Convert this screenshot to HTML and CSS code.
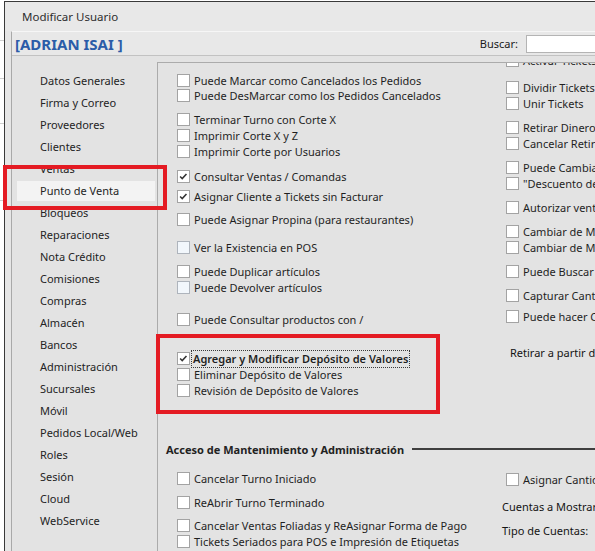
FILE: index.html
```html
<!DOCTYPE html>
<html lang="es">
<head>
<meta charset="utf-8">
<title>Modificar Usuario</title>
<link rel="stylesheet" href="styles.css">
</head>
<body>
<div class="dialog">
  <div class="titlebar">Modificar Usuario</div>
  <div class="frame">
    <div class="header">
      <span class="name">[ADRIAN ISAI ]</span>
      <span class="search-label">Buscar:</span>
      <span class="search-input"></span>
    </div>
    <div class="main">
      <nav class="sidebar">
        <div class="nav-item">Datos Generales</div>
        <div class="nav-item">Firma y Correo</div>
        <div class="nav-item">Proveedores</div>
        <div class="nav-item">Clientes</div>
        <div class="nav-item">Ventas</div>
        <div class="nav-item active">Punto de Venta</div>
        <div class="nav-item">Bloqueos</div>
        <div class="nav-item">Reparaciones</div>
        <div class="nav-item">Nota Crédito</div>
        <div class="nav-item">Comisiones</div>
        <div class="nav-item">Compras</div>
        <div class="nav-item">Almacén</div>
        <div class="nav-item">Bancos</div>
        <div class="nav-item">Administración</div>
        <div class="nav-item">Sucursales</div>
        <div class="nav-item">Móvil</div>
        <div class="nav-item">Pedidos Local/Web</div>
        <div class="nav-item">Roles</div>
        <div class="nav-item">Sesión</div>
        <div class="nav-item">Cloud</div>
        <div class="nav-item">WebService</div>
      </nav>
      <section class="panel">
        <div class="grid">
          <div class="col col-left">
            <div class="row m11"><span class="cb"></span><span class="lbl">Puede Marcar como Cancelados los Pedidos</span></div>
            <div class="row m2"><span class="cb"></span><span class="lbl">Puede DesMarcar como los Pedidos Cancelados</span></div>
            <div class="row m11"><span class="cb"></span><span class="lbl">Terminar Turno con Corte X</span></div>
            <div class="row m3"><span class="cb"></span><span class="lbl">Imprimir Corte X y Z</span></div>
            <div class="row m3"><span class="cb"></span><span class="lbl">Imprimir Corte por Usuarios</span></div>
            <div class="row m12"><span class="cb on"><svg viewBox="0 0 13 13"><path d="M2.5 6.5 L5 9 L10 3.5"/></svg></span><span class="lbl">Consultar Ventas / Comandas</span></div>
            <div class="row m7"><span class="cb on"><svg viewBox="0 0 13 13"><path d="M2.5 6.5 L5 9 L10 3.5"/></svg></span><span class="lbl">Asignar Cliente a Tickets sin Facturar</span></div>
            <div class="row m10"><span class="cb"></span><span class="lbl">Puede Asignar Propina (para restaurantes)</span></div>
            <div class="row m15"><span class="cb tint"></span><span class="lbl">Ver la Existencia en POS</span></div>
            <div class="row m11"><span class="cb"></span><span class="lbl">Puede Duplicar artículos</span></div>
            <div class="row m3"><span class="cb tint"></span><span class="lbl">Puede Devolver artículos</span></div>
            <div class="row m19"><span class="cb"></span><span class="lbl">Puede Consultar productos con /</span></div>
            <div class="row m26"><span class="cb on"><svg viewBox="0 0 13 13"><path d="M2.5 6.5 L5 9 L10 3.5"/></svg></span><span class="lbl focus">Agregar y Modificar Depósito de Valores</span></div>
            <div class="row m3"><span class="cb"></span><span class="lbl">Eliminar Depósito de Valores</span></div>
            <div class="row m3"><span class="cb"></span><span class="lbl">Revisión de Depósito de Valores</span></div>
          </div>
          <div class="col col-right">
            <div class="row mneg"><span class="cb"></span><span class="lbl">Activar Tickets</span></div>
            <div class="row m14"><span class="cb"></span><span class="lbl">Dividir Tickets</span></div>
            <div class="row m3"><span class="cb"></span><span class="lbl">Unir Tickets</span></div>
            <div class="row m11"><span class="cb"></span><span class="lbl">Retirar Dinero</span></div>
            <div class="row m3"><span class="cb"></span><span class="lbl">Cancelar Retiro de Dinero</span></div>
            <div class="row m11"><span class="cb"></span><span class="lbl">Puede Cambiar Precio</span></div>
            <div class="row m3"><span class="cb"></span><span class="lbl">"Descuento de Artículos"</span></div>
            <div class="row m11"><span class="cb"></span><span class="lbl">Autorizar ventas</span></div>
            <div class="row m11"><span class="cb"></span><span class="lbl">Cambiar de Mesa</span></div>
            <div class="row m3"><span class="cb"></span><span class="lbl">Cambiar de Mesero</span></div>
            <div class="row m11"><span class="cb"></span><span class="lbl">Puede Buscar y Reimprimir</span></div>
            <div class="row m11"><span class="cb"></span><span class="lbl">Capturar Cantidad</span></div>
            <div class="row m8"><span class="cb"></span><span class="lbl">Puede hacer Cortes</span></div>
            <div class="text-row m22 indent">Retirar a partir de</div>
          </div>
        </div>
        <div class="heading">
          <span class="heading-text">Acceso de Mantenimiento y Administración</span>
          <span class="rule"></span>
        </div>
        <div class="grid">
          <div class="col col-left">
            <div class="row m15"><span class="cb"></span><span class="lbl">Cancelar Turno Iniciado</span></div>
            <div class="row m11"><span class="cb"></span><span class="lbl">ReAbrir Turno Terminado</span></div>
            <div class="row m10"><span class="cb"></span><span class="lbl">Cancelar Ventas Foliadas y ReAsignar Forma de Pago</span></div>
            <div class="row m3"><span class="cb"></span><span class="lbl">Tickets Seriados para POS e Impresión de Etiquetas</span></div>
          </div>
          <div class="col col-right">
            <div class="row m16"><span class="cb"></span><span class="lbl">Asignar Cantidad</span></div>
            <div class="text-row m13">Cuentas a Mostrar</div>
            <div class="text-row m8">Tipo de Cuentas:</div>
          </div>
        </div>
      </section>
    </div>
  </div>
</div>
<div class="mark mark-nav"></div>
<div class="mark mark-deposit"></div>
</body>
</html>
```

FILE: styles.css
```css
html, body {
  margin: 0;
  height: 100%;
  overflow: hidden;
}

body {
  position: relative;
  background: #ffffff;
  background-image:
    linear-gradient(#cfcfcf, #cfcfcf),
    linear-gradient(#cfcfcf, #cfcfcf),
    linear-gradient(#cfcfcf, #cfcfcf),
    linear-gradient(#cfcfcf, #cfcfcf);
  background-size: 4px 1px;
  background-repeat: no-repeat;
  background-position: 0 40px, 0 78px, 0 123px, 0 200px;
  font-family: "Noto Sans", "Open Sans", sans-serif;
  font-size: 11px;
  color: #1f1f1f;
}

.dialog {
  margin: 1px 0 0 4px;
  width: 600px;
  height: 560px;
  border-top: 1px solid #3a3a3a;
  border-left: 1px solid #3a3a3a;
  background: #e6e6e6;
  display: flex;
  flex-direction: column;
}

.titlebar {
  height: 29px;
  line-height: 29px;
  padding-left: 17px;
  font-size: 11.5px;
  color: #2e2e2e;
  background: #e8e8e8;
}

.frame {
  flex: 1;
  margin-left: 6px;
  border-left: 1px solid #a9a9a9;
  border-top: 1px solid #f6f6f6;
  background: #e3e3e3;
  display: flex;
  flex-direction: column;
  min-height: 0;
}

.header {
  height: 23px;
  border-bottom: 1px solid #c2c2c2;
  background: #e8e8e8;
  display: flex;
  align-items: center;
  padding-left: 3px;
}

.name {
  font-weight: 700;
  font-size: 15px;
  color: #2b5ca8;
}

.search-label {
  margin-left: auto;
  color: #1a1a1a;
}

.search-input {
  width: 79px;
  height: 18px;
  margin-left: 8px;
  box-sizing: border-box;
  border: 1px solid #b4b4b4;
  border-right: 0;
  background: #ffffff;
}

.main {
  flex: 1;
  display: flex;
  min-height: 0;
}

.sidebar {
  width: 145px;
  flex: none;
  padding-top: 15px;
}

.nav-item {
  margin-left: 5px;
  width: 138px;
  height: 20px;
  line-height: 20px;
  padding-left: 23px;
  margin-bottom: 2px;
  box-sizing: border-box;
  color: #242424;
}

.nav-item.active {
  background: #f3f3f3;
}

.panel {
  flex: 1;
  margin-top: 6px;
  border-top: 1px solid #ababab;
  border-left: 1px solid #ababab;
  overflow: hidden;
}

.grid {
  display: grid;
  grid-template-columns: 344px 1fr;
  align-items: start;
}

.col-left {
  padding-left: 19px;
}

.col-right {
  white-space: nowrap;
}

.col-right .row {
  margin-left: 4px;
}

.row {
  display: flex;
  align-items: center;
  height: 13px;
  white-space: nowrap;
}

.cb {
  flex: none;
  width: 13px;
  height: 13px;
  box-sizing: border-box;
  border: 1px solid #a3a3a3;
  background: #ffffff;
  margin-right: 4px;
  display: flex;
}

.cb.tint {
  background: #f2f7fc;
  border-color: #aeb4bc;
}

.cb svg {
  width: 11px;
  height: 11px;
  fill: none;
  stroke: #333333;
  stroke-width: 1.8;
}

.lbl {
  line-height: 16px;
}

.lbl.focus {
  font-weight: 600;
  outline: 1px dotted #3a3a3a;
  outline-offset: 0;
  padding: 0 1px;
  margin-left: -2px;
}

.text-row {
  height: 16px;
  line-height: 16px;
  color: #141414;
}

.text-row.indent {
  margin-left: 8px;
}

.heading {
  display: flex;
  align-items: center;
  height: 16px;
  margin-top: 44px;
  padding-left: 8px;
}

.heading-text {
  font-weight: 700;
  color: #222222;
  white-space: nowrap;
}

.rule {
  flex: 1;
  height: 2px;
  margin-left: 8px;
  background: #3f3f3f;
}

.mneg { margin-top: -9px; }
.m2 { margin-top: 2px; }
.m3 { margin-top: 3px; }
.m7 { margin-top: 7px; }
.m8 { margin-top: 8px; }
.m10 { margin-top: 10px; }
.m11 { margin-top: 11px; }
.m12 { margin-top: 12px; }
.m13 { margin-top: 13px; }
.m14 { margin-top: 14px; }
.m15 { margin-top: 15px; }
.m16 { margin-top: 16px; }
.m19 { margin-top: 19px; }
.m22 { margin-top: 22px; }
.m26 { margin-top: 26px; }

.mark {
  position: absolute;
  box-sizing: border-box;
  border: 4px solid #e41b23;
}

.mark-nav {
  left: 3px;
  top: 165px;
  width: 164px;
  height: 45px;
}

.mark-deposit {
  left: 156px;
  top: 334px;
  width: 284px;
  height: 80px;
}
```
